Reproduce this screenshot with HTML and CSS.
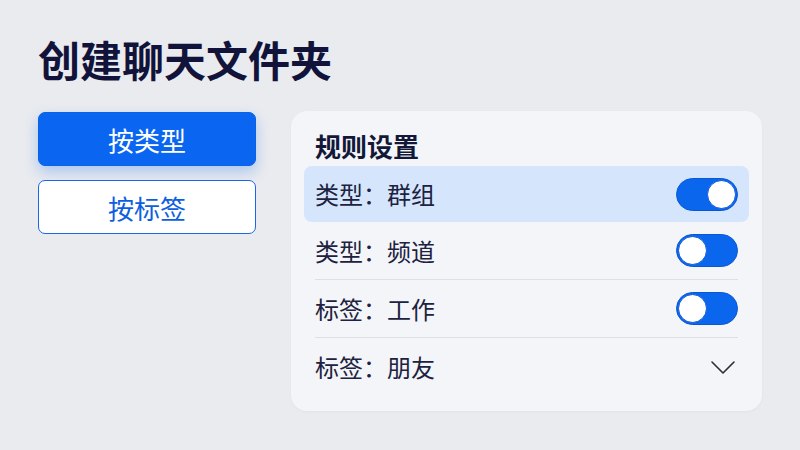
FILE: index.html
```html
<!DOCTYPE html>
<html lang="zh-CN">
<head>
<meta charset="utf-8">
<link rel="stylesheet" href="styles.css">
</head>
<body>
<div class="page">
  <h1 class="title">创建聊天文件夹</h1>
  <div class="content">
    <div class="side">
      <button class="btn btn-primary">按类型</button>
      <button class="btn btn-outline">按标签</button>
    </div>
    <div class="card">
      <h2 class="card-title">规则设置</h2>
      <div class="row row-active">
        <span class="label">类型：群组</span>
        <span class="toggle on"><span class="knob"></span></span>
      </div>
      <div class="row row-line">
        <span class="label">类型：频道</span>
        <span class="toggle"><span class="knob"></span></span>
      </div>
      <div class="row row-line">
        <span class="label">标签：工作</span>
        <span class="toggle"><span class="knob"></span></span>
      </div>
      <div class="row">
        <span class="label">标签：朋友</span>
        <svg class="chev" width="26" height="15" viewBox="0 0 26 15"><path d="M2 2 L13 13 L24 2" fill="none" stroke="#2a2d38" stroke-width="1.6" stroke-linecap="round" stroke-linejoin="round"/></svg>
      </div>
    </div>
  </div>
</div>
</body>
</html>
```
FILE: styles.css
```css
* { box-sizing: border-box; }
html, body { margin: 0; padding: 0; }
body {
  width: 800px;
  height: 450px;
  overflow: hidden;
  background: #e9ebef;
  font-family: "Noto Sans CJK SC", "Noto Sans", sans-serif;
  color: #1c2240;
}
.page {
  padding: 30px 38px 0 38px;
}
.title {
  margin: 0;
  font-size: 42px;
  line-height: 58px;
  font-weight: 700;
  color: #12133a;
  letter-spacing: 0;
}
.content {
  display: flex;
  align-items: flex-start;
  gap: 35px;
  margin-top: 23px;
}
.side {
  width: 218px;
  display: flex;
  flex-direction: column;
  gap: 14px;
  margin-top: 1px;
}
.btn {
  height: 54px;
  border-radius: 7px;
  font-family: inherit;
  font-size: 26px;
  font-weight: 400;
  padding: 0;
  cursor: pointer;
}
.btn-primary {
  background: #0a66f0;
  border: 1px solid #0a62e6;
  color: #ffffff;
  box-shadow: 0 6px 14px rgba(10, 102, 240, 0.28);
}
.btn-outline {
  background: #ffffff;
  border: 1.5px solid #1a66e6;
  color: #0e5fe0;
}
.card {
  width: 471px;
  height: 300px;
  background: #f3f5f8;
  border-radius: 16px;
  padding: 14px 13px 15px 13px;
  box-shadow: 0 1px 3px rgba(20, 30, 60, 0.04);
}
.card-title {
  margin: 0 0 0 11px;
  font-size: 26px;
  line-height: 41px;
  font-weight: 700;
  color: #141838;
}
.row {
  display: flex;
  align-items: center;
  justify-content: space-between;
  height: 58px;
  margin: 0 11px;
}
.row-active {
  height: 56px;
  margin: 0;
  padding: 0 11px;
  background: #d5e6fc;
  border-radius: 8px;
}
.row-line {
  border-bottom: 1px solid #dcdfe5;
}
.label {
  font-size: 24px;
  line-height: 30px;
  color: #1c2240;
}
.toggle {
  width: 62px;
  height: 33px;
  border-radius: 17px;
  background: #0b66ee;
  border: 1.5px solid #0a57d6;
  display: flex;
  align-items: center;
  justify-content: flex-start;
  padding: 0 1px;
}
.toggle.on {
  justify-content: flex-end;
}
.knob {
  width: 29px;
  height: 29px;
  border-radius: 50%;
  background: #ffffff;
  border: 1.5px solid #0a57d6;
}
.chev {
  margin-right: 2px;
}
```
